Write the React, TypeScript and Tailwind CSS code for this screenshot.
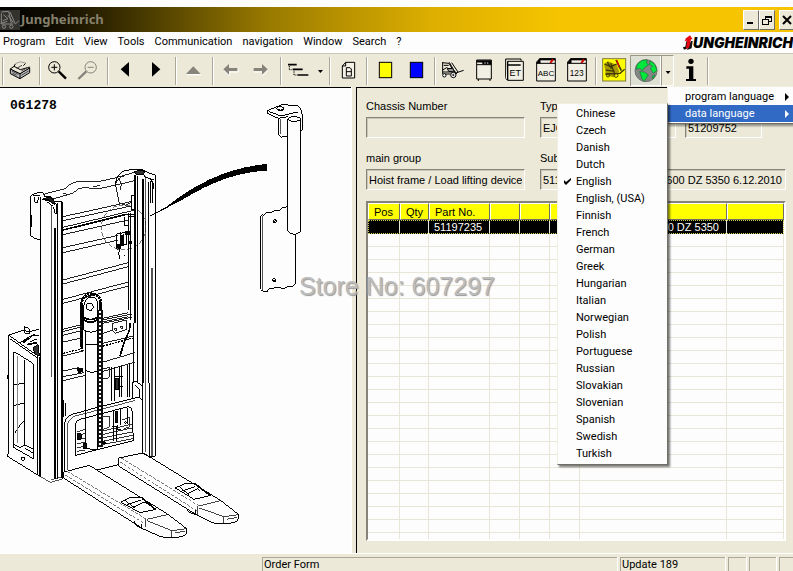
import React from "react";

const UI = "font-['Roboto',sans-serif]";
const FORM = "font-['Liberation_Sans',Arial,sans-serif]";

const menus = ["Program", "Edit", "View", "Tools", "Communication", "navigation", "Window", "Search", "?"];

const languages = [
  "Chinese", "Czech", "Danish", "Dutch", "English", "English, (USA)", "Finnish",
  "French", "German", "Greek", "Hungarian", "Italian", "Norwegian", "Polish",
  "Portuguese", "Russian", "Slovakian", "Slovenian", "Spanish", "Swedish", "Turkish",
];

const columns = ["Pos", "Qty", "Part No.", "", "", "", "", ""];
const firstRow = ["", "", "51197235", "", "", "", "600 DZ 5350", ""];
const emptyRows = Array.from({ length: 24 }, (_, i) => i);

function Tool({ label, x, children, pressed }: { label: string; x: number; children: React.ReactNode; pressed?: boolean }) {
  return (
    <button
      type="button"
      aria-label={label}
      className={`h-[31px] w-[31px] shrink-0 ${pressed ? "bg-[#dfe0d4] shadow-[inset_1px_1px_0_#9a9a8c,inset_-1px_-1px_0_#ffffff]" : ""}`}
    >
      <svg viewBox={`${x} 165 93 93`} className="block h-[31px] w-[31px]" fill="none" stroke="#000" strokeWidth="3">
        {children}
      </svg>
    </button>
  );
}

function Sep() {
  return <div className="mx-0.5 h-7 w-0.5 shrink-0 border-r border-l border-r-white border-l-[#aca899]" />;
}

function Toolbar() {
  return (
    <div className="flex h-[34px] shrink-0 items-center border-t border-t-[#c9c7b8] bg-[#ece9d8]" role="toolbar">
      <Sep />
      <Tool label="Print" x={18}>
        <path d="M31 207 L60 221 L89 203 V218 L60 236 L31 221 Z" fill="#bdbdbd" />
        <path d="M31 207 L42 198 L48 191 Q58 181 76 189 L70 197 L89 203 L60 221 Z" fill="#ece9d8" stroke="none" />
        <path d="M31 207 L42 199 L61 209 L89 201 M42 199 L46 192 M70 197 L77 190 M60 221 V236 M31 207 L60 221 L89 204" />
        <path d="M46 191 Q60 181 77 189" stroke="#999" />
        <path d="M64 213 L84 202 M36 213 L55 223 M37 219 L50 226 M64 226 L86 213 M50 205 L66 196" stroke="#444" />
      </Tool>
      <Sep />
      <Tool label="Zoom in" x={129}>
        <circle cx="163" cy="202" r="17" />
        <path d="M154 202 H172 M163 193 V211" />
        <path d="M176 214 L198 236" strokeWidth="7" />
      </Tool>
      <Tool label="Zoom out" x={222}>
        <g stroke="#85837a">
          <circle cx="272" cy="202" r="17" />
          <path d="M263 202 H281" />
          <path d="M259 214 L235 237" strokeWidth="7" />
        </g>
      </Tool>
      <Sep />
      <Tool label="Previous" x={333}><path d="M387 186 V230 L362 208 Z" fill="#000" stroke="none" /></Tool>
      <Tool label="Next" x={426}><path d="M456 186 V230 L481 208 Z" fill="#000" stroke="none" /></Tool>
      <Sep />
      <Tool label="Up" x={537}>
        <path d="M558 222 H603 V226 H562 Z" fill="#fff" stroke="none" />
        <path d="M558 222 L580 199 L602 222 Z" fill="#85837a" stroke="none" />
      </Tool>
      <Sep />
      <Tool label="Back" x={648}>
        <path d="M672 212 L688 227 V216 H714 V207" stroke="#fff" />
        <path d="M670 208 L687 192 V204 H712 V213 H687 V224 Z" fill="#85837a" stroke="none" />
      </Tool>
      <Tool label="Forward" x={741}>
        <path d="M804 211 L788 227 V216 H762" stroke="#fff" />
        <path d="M803 208 L786 192 V204 H761 V213 H786 V224 Z" fill="#85837a" stroke="none" />
      </Tool>
      <Sep />
      <Tool label="Structure" x={72}>
        <path d="M84 194 H110 M98 208 H128 M112 225 H145" strokeWidth="5" />
        <path d="M88 198 V209 H96 M102 212 V225 H110" strokeDasharray="3 2" />
      </Tool>
      <button type="button" aria-label="Structure options" className="h-[31px] w-3 shrink-0">
        <svg viewBox="165 165 36 93" className="block h-[31px] w-3"><path d="M174 210 H189 L181 219 Z" /></svg>
      </button>
      <Sep />
      <Tool label="Document" x={219}>
        <path d="M257 187 H284 V234 H247 V198 Z M247 198 H257 V187" fill="#f4f2e6" />
        <path d="M259 203 H270 L274 207 V228 H259 Z M259 215 H274" />
      </Tool>
      <Sep />
      <Tool label="Yellow marker" x={330}><rect x="358" y="187" width="37" height="46" fill="#ff0" /></Tool>
      <Tool label="Blue marker" x={423}><rect x="451" y="187" width="37" height="46" fill="#00f" /></Tool>
      <Sep />
      <Tool label="Truck" x={534}>
        <path d="M548 187 V222 M546 188 L567 190 L580 212 M551 196 H566 M548 210 L560 203 L575 211 L590 218 L611 211 M568 187 L588 222 L594 216 L575 188 M553 222 H572 M548 216 H584" />
        <path d="M562 206 L578 205 L584 216 L566 214 Z" fill="#999" />
        <circle cx="553" cy="226" r="5" fill="#fff" /><circle cx="580" cy="225" r="8" fill="#fff" /><circle cx="580" cy="225" r="2" />
      </Tool>
      <Tool label="Equipment" x={627}>
        <path d="M650 180 H694 V237 H650 Z" fill="#f2f0e4" />
        <path d="M650 184 H694 M667 190 H694" strokeWidth="7" />
        <path d="M650 194 H694 M655 237 V243 M690 237 V243" />
        <path d="M673 189 H677 M681 189 H685" stroke="#fff" />
      </Tool>
      <Tool label="Spare parts" x={720}>
        <path d="M737 234 V177 H783 V182" fill="#ece9d8" />
        <path d="M743 184 H790 V241 H743 L737 235" fill="#f2f0e4" />
        <path d="M743 184 V241 M743 195 H782" strokeWidth="4" />
        <text x="766" y="228" textAnchor="middle" fontSize="27" fill="#000" stroke="none" className="font-['Liberation_Sans',sans-serif]">ET</text>
      </Tool>
      <Tool label="Alphabetical index" x={33}>
        <path d="M59 176 H106 V243 H50 V186 Z" fill="#f2f0e4" />
        <path d="M50 190 L60 176 V190 Z" fill="#000" /><path d="M59 178 H106" strokeWidth="6" /><path d="M60 190 H106" />
        <path d="M91 189 L99 178" stroke="#d00000" strokeWidth="6" />
        <text x="78" y="228" textAnchor="middle" fontSize="24" fill="#000" stroke="none" className="font-['Liberation_Sans',sans-serif]">ABC</text>
      </Tool>
      <Tool label="Numerical index" x={126}>
        <path d="M152 176 H199 V243 H143 V186 Z" fill="#f2f0e4" />
        <path d="M143 190 L153 176 V190 Z" fill="#000" /><path d="M152 178 H199" strokeWidth="6" /><path d="M153 190 H199" />
        <path d="M184 189 L192 178" stroke="#d00000" strokeWidth="6" />
        <text x="170" y="228" textAnchor="middle" fontSize="25" fill="#000" stroke="none" className="font-['Liberation_Sans',sans-serif]">123</text>
      </Tool>
      <Sep />
      <Tool label="Order" x={237}>
        <rect x="248" y="176" width="69" height="67" fill="#ff0" stroke="#807b3a" />
        <path d="M252 192 L264 184 L290 194 L298 216 L280 232 L258 226 Z" fill="#a89a00" stroke="none" />
        <path d="M254 192 L272 200 L290 192 M258 210 L284 214 M256 222 L300 220 L314 208 M272 190 L284 222 M262 186 L274 206" stroke="#403c00" strokeWidth="4" />
        <path d="M288 180 L304 212" stroke="#403c00" strokeWidth="5" />
        <path d="M290 180 L298 202" stroke="#d00000" strokeWidth="4" />
        <circle cx="264" cy="226" r="5" stroke="#403c00" /><circle cx="288" cy="226" r="6" stroke="#403c00" />
      </Tool>
      <Tool label="Language" x={330} pressed>
        <circle cx="378" cy="212" r="33" fill="#858585" stroke="#6d7770" />
        <g fill="#00e83c" stroke="#1b7434" strokeWidth="2">
          <path d="M352 193 L366 181 L382 180 L379 189 L386 194 L373 203 L367 212 L359 205 L349 208 Z" />
          <path d="M390 182 L404 193 L411 211 L400 220 L391 205 L398 199 L389 194 Z" />
          <path d="M359 215 L373 216 L385 225 L379 234 L372 244 L366 237 Z" />
          <path d="M396 229 L405 225 L399 237 Z" />
        </g>
      </Tool>
      <div className={`relative z-10 h-[31px] w-[13px] shrink-0 ${UI} text-[11px] leading-[17px]`}>
        <button type="button" aria-label="Language options" className="block h-[31px] w-[13px] border border-t-[#9a9a8c] border-r-white border-b-white border-l-[#9a9a8c]">
          <svg viewBox="427 168 33 87" className="block h-[29px] w-[11px]"><path d="M438 213 H453 L445 222 Z" /></svg>
        </button>
        <div role="menu" className="absolute top-full left-[6px] w-[130px] border border-[#f1efe2] border-b-[#716f64] bg-[#fdfdfd] py-px shadow-[2px_2px_2px_#00000066]">
          <button type="button" role="menuitem" className="flex w-full items-center justify-between pr-[7px] pl-[17px]">
            program language
            <svg viewBox="0 0 4 8" className="h-2 w-1"><path d="M0 0 L4 4 L0 8 Z" /></svg>
          </button>
          <button type="button" role="menuitem" className="flex w-full items-center justify-between bg-[#316ac5] pr-[7px] pl-[17px] text-white">
            data language
            <svg viewBox="0 0 4 8" className="h-2 w-1" fill="#fff"><path d="M0 0 L4 4 L0 8 Z" /></svg>
          </button>
          <div role="menu" className="absolute top-4 right-full w-[111px] border border-t-[#f1efe2] border-r-[#716f64] border-b-[#716f64] border-l-[#f1efe2] bg-[#fdfdfd] pt-px pb-0.5 text-black shadow-[2px_2px_2px_#00000088]">
            {languages.map((name) => (
              <button key={name} type="button" role="menuitemradio" aria-checked={name === "English"} className="flex w-full items-center">
                <span className="flex w-[18px] justify-center">
                  {name === "English" && (
                    <svg viewBox="0 0 7 7" className="h-[7px] w-[7px]"><path d="M0 2 L2 4 L7 0 V2 L2 7 L0 5 Z" /></svg>
                  )}
                </span>
                {name}
              </button>
            ))}
          </div>
        </div>
      </div>
      <Tool label="Information" x={462}>
        <circle cx="513" cy="184" r="8" fill="#000" stroke="none" />
        <path d="M499 199 H520 V237 H528 V243 H498 V237 H507 V206 H499 Z" fill="#000" stroke="none" />
      </Tool>
      <Sep />
    </div>
  );
}

function TitleBar() {
  const box = "flex h-5 w-4 items-center justify-center border border-t-white border-l-white border-r-[#716f64] border-b-[#716f64] bg-[#ece9d8]";
  return (
    <header className="mt-[7px] flex h-[25px] shrink-0 items-center bg-[linear-gradient(90deg,#000_0px,#120e00_60px,#9a7b00_270px,#dcae00_430px,#f6c400_560px)]">
      <svg viewBox="0 24 60 60" className="h-5 w-5" fill="none" stroke="#8b8b8b" strokeWidth="3">
        <rect x="0" y="24" width="60" height="60" fill="#34322c" stroke="none" />
        <path d="M4 30 L26 28 L34 64 M4 34 V66 H40 M10 38 L24 50 L8 56 M30 30 L46 66 L57 56 M2 64 L22 58 M24 40 L40 62" />
        <circle cx="12" cy="74" r="5" /><circle cx="34" cy="74" r="5" />
      </svg>
      <h1 className="ml-px flex-1 font-['Noto_Sans',sans-serif] text-[13px] font-bold text-[#85806c]">Jungheinrich</h1>
      <button type="button" aria-label="Minimize" className={box}>
        <svg viewBox="0 0 10 10" className="h-2.5 w-2.5"><path d="M1 7 H7 V9 H1 Z" /></svg>
      </button>
      <button type="button" aria-label="Restore" className={box}>
        <svg viewBox="0 0 10 10" className="h-2.5 w-2.5" fill="none" stroke="#000" shapeRendering="crispEdges">
          <path d="M3 1 H10 M3 2 H9.5 V6.5 H7 M3.5 1 V4 M0 4 H7 M.5 4 V9.5 H6.5 V4.5 H0" />
        </svg>
      </button>
      <button type="button" aria-label="Close" className={`${box} -mr-0.5 ml-1`}>
        <svg viewBox="0 0 10 10" className="h-2.5 w-2.5" stroke="#000" strokeWidth="2"><path d="M1 1 L9 9 M9 1 L1 9" /></svg>
      </button>
    </header>
  );
}

function MenuBar() {
  return (
    <nav className={`flex h-[21px] shrink-0 items-center gap-2.5 bg-[#fdfdfd] pl-[3px] ${UI} text-[11px]`}>
      {menus.map((m) => <button key={m} type="button">{m}</button>)}
      <div className="ml-auto flex items-center" aria-label="Jungheinrich">
        <svg viewBox="488 100 30 48" className="h-4 w-2.5 shrink-0">
          <path d="M503 122 L501 138 Q499 145 490 143 L488 136 L495 135 L498 118 Z M503 136 L512 118 L517 118 L514 140 L500 145 Z" fill="#111" />
          <path d="M492 120 L496 112 L494 112 L509 101 L517 113 L512 113 L507 136 Q505 141 497 141 L500 117 L496 117 Z" fill="#e30613" />
        </svg>
        <span className="font-['Inter',sans-serif] text-[14px] leading-[14px] font-black italic">UNGHEINRICH</span>
      </div>
    </nav>
  );
}

/* Exploded view of the hoist frame; both drawing groups use a 3:1 working scale. */
function Drawing() {
  return (
    <svg viewBox="0 88 351 464" className="block h-[464px] w-[351px]" fill="none" stroke="#000" shapeRendering="crispEdges" role="img" aria-label="Hoist frame drawing">
      <text x="10" y="109" fontSize="13" fontWeight="bold" fill="#000" stroke="none" className="font-['Liberation_Mono',monospace]">061278</text>
      <g transform="translate(0 90) scale(.33333)" strokeWidth="3">
        {/* bracket and tube */}
        <path d="M802 62 L847 44 L893 47 Q907 58 907 75 V120 L902 124 M802 62 V70 L835 85 L864 80 M806 64 L842 78 L893 66 M835 85 V130 Q838 143 850 141 L864 137" />
        <path d="M841 86 V132" strokeWidth="2" />
        <ellipse cx="841" cy="56" rx="11" ry="6" /><path d="M834 58 Q841 64 850 58" />
        <path d="M864 88 V424 Q883 442 902 424 V88" fill="#fdfdfd" />
        <ellipse cx="883" cy="87" rx="19" ry="7" fill="#fdfdfd" />
        <path d="M864 350 L848 353 L838 362 L822 362 L815 368 L798 368 L791 376 Q783 372 782 382 V598 Q790 609 802 605 L806 597 L838 591 L846 597 L862 591 L880 588 Q886 584 886 576 V434" />
        <path d="M789 377 V602" strokeWidth="2" />
        <circle cx="824" cy="394" r="5" /><circle cx="823" cy="571" r="5" /><path d="M819 398 L828 390 M818 575 L827 567" />
        {/* pointer */}
        <path d="M436 385 L500 350 Q640 236 801 222 V242 Q680 248 560 322 L470 370 Z" fill="#000" stroke="none" />
        <circle cx="371" cy="412" r="67" strokeWidth="3" strokeDasharray="14 6" stroke="#777" />
        {/* cross members */}
        <g strokeWidth="3" stroke="#222">
          <path d="M130 313 L195 296 L207 285 Q222 274 240 274 Q266 276 290 276 L345 264 L404 247 M145 331 L218 310 L236 296 Q250 292 266 294 L294 297 L405 272 M190 310 L200 313 M280 290 L300 286" />
          <path d="M189 380 L393 335 M189 392 L393 348 M189 412 L405 360 M189 434 L385 390 M189 473 L355 436 M189 488 L355 450 M189 570 L385 518 M189 582 L385 530 M189 628 L385 576 M189 640 L385 588 M308 690 L395 672 M308 700 L395 682 M189 718 L244 704" />
          <path d="M345 288 Q352 262 372 258 M348 292 L358 340 L378 346 L395 335 M355 265 L365 282 L360 300" />
        </g>
        <path d="M189 420 L375 374" strokeWidth="5" />
        {/* left bracket */}
        <path d="M92 438 V320 Q94 312 118 307 Q133 305 133 320 M92 438 Q104 446 121 450 M102 322 Q104 342 112 338 L116 322 M96 374 V410 M100 316 L120 318 M135 320 L152 320 Q164 328 164 344 M126 328 L160 336 L187 334 M140 334 L160 350 L166 372 M150 330 L170 344 V372" />
        <path d="M128 326 L150 322 L166 338 L160 342 L144 328 Z" fill="#222" />
        {/* top right head */}
        <path d="M346 290 Q346 252 376 241 L412 238 L428 240 L440 246 L467 256 M402 244 L430 250 L436 262 L462 270 M452 268 Q462 280 462 296 M452 272 V338 M458 272 V340" />
        <path d="M402 246 L418 240 L434 244 L430 255 L410 254 Z" fill="#333" />
        <path d="M394 318 H404 V360 H394 Z" fill="#fdfdfd" />
        {/* mast posts */}
        <path d="M121 322 V1160 M172 340 V1166 M187 336 V1168 M385 370 V660 M392 370 V690 M468 258 V550 M466 550 V1097" />
        <path d="M166 415 V1168" strokeWidth="5" />
        <path d="M155 345 V860 M436 258 V1085" strokeWidth="2" />
        <path d="M187 336 V1165 M406 255 V700" strokeWidth="5" />
        <path d="M430 268 V880 M446 275 V880" strokeWidth="5" />
        <path d="M428 880 V1090 M449 880 V1100" />
        <path d="M456 535 V1097" stroke="#555" strokeWidth="5" />
        <path d="M401 700 V880 M412 258 V880" strokeWidth="3" />
        {/* limit switch */}
        <path d="M350 432 L362 428 V474 L350 478 Z M362 430 L380 424 V462 L364 468 M358 478 Q354 490 360 508 M376 374 H404 V380 H384 M374 380 V408 H384" />
        <path d="M364 438 L372 434 V464 L364 468 Z M352 464 H362 V474 H352 Z M378 424 H392 V434 H378 Z M386 454 H396 V460 H386 Z" fill="#000" />
        <circle cx="374" cy="497" r="1" />
        {/* chain wheel */}
        <path d="M244 770 V640 Q250 613 274 612 Q300 613 303 640 V690" strokeWidth="9" strokeDasharray="7 2" />
        <path d="M252 700 V645 Q256 622 276 621 Q292 624 294 645 V700" fill="#fdfdfd" />
        <circle cx="269" cy="650" r="11" />
      </g>
      <g transform="translate(0 310) scale(.33333)" strokeWidth="3">
        {/* battery cabinet */}
        <path d="M26 75 L24 440 L118 498 M26 75 L72 60 L84 66 L118 58 M26 75 Q70 108 114 138 M30 86 L110 142 M114 138 V496 M120 140 V498 M60 98 L90 80 L104 74 M72 50 L74 70 L88 72 V56 L72 50 M84 90 L98 74 L118 78 M90 96 L112 86 M22 196 V208" />
        <path d="M100 112 L114 104 L118 138 L104 132 Z" fill="#333" /><path d="M70 98 L86 82 M80 104 L110 98" strokeWidth="5" />
        <path d="M40 128 L46 127 L96 158 Q100 162 100 170 V446 L40 412 Z M75 150 V405 M40 224 L75 220 M40 287 L75 278 M75 330 L60 345 L44 370 M75 405 L98 416 M75 415 L98 428 M42 404 L60 412 L75 405" />
        <path d="M52 138 V400" stroke="#888" /><circle cx="69" cy="446" r="5" />
        <path d="M118 498 L152 517 L187 507 M152 510 L190 500" strokeWidth="2" />
        {/* lift cylinder and chain */}
        <path d="M301 0 V410" strokeWidth="15" stroke="#111" />
        <path d="M301 4 V405" stroke="#fff" strokeWidth="5" strokeDasharray="4 8" />
        <path d="M247 0 V130" strokeWidth="7" strokeDasharray="7 3" />
        <path d="M252 0 V60 L257 66 V415 L292 420 V0" fill="#fdfdfd" />
        <path d="M252 22 Q270 36 292 22 M252 30 Q270 44 292 30" strokeWidth="5" />
        <path d="M252 60 Q272 72 292 62 M257 104 H292 M257 182 Q274 192 292 184 M266 0 H276" />
        <path d="M232 175 H246 L250 184 L236 188 Z" fill="#000" />
        {/* lower cross members */}
        <g strokeWidth="3" stroke="#222">
          <path d="M189 65 L245 50 M189 76 L245 62 M189 96 L245 84 M189 138 L252 122 M189 183 L236 173 M189 200 L252 188 M189 212 L256 196 M308 25 L385 8 M308 36 L385 20 M308 100 L400 78 M310 156 L405 128 M310 184 L405 156 M310 70 L340 60" />
          <path d="M338 40 L380 30 V58 L346 70 L338 62 Z" /><circle cx="347" cy="58" r="4" /><circle cx="365" cy="52" r="4" />
          <path d="M310 176 L330 172 V200 Q320 210 310 206" />
        </g>
        <path d="M189 130 L246 116 M310 108 L400 84" strokeDasharray="6 3" strokeWidth="4" />
        <path d="M391 40 L388 62 L374 92 L360 138" strokeWidth="5" />
        <path d="M336 172 V272 M343 172 V272 M358 168 V262 M364 168 V262 M383 164 V260 M389 162 V260 M345 200 H368 M350 230 H370" strokeWidth="3" />
        <path d="M346 205 H356 V240 H346 Z" fill="#333" />
        {/* fork carriage */}
        <path d="M194 488 V340 Q196 320 220 312 L300 290 L412 262 Q426 262 428 276 V430" />
        <path d="M202 480 V345 Q206 326 226 318 L306 297 L404 272" strokeWidth="2" />
        <path d="M398 216 H410 L428 228 V264 M398 216 V264 M404 226 L418 236 V262 M190 270 V320 M197 280 V318" />
        <path d="M226 436 V345 Q228 332 240 328 L384 290 Q395 290 396 302 L400 392 Z" />
        <path d="M230 366 L256 358 M230 378 L256 370 M230 390 L256 384 M230 402 L256 396 M230 414 L256 408 M230 424 L256 420 M306 364 L396 342 M306 374 L396 354 M306 384 L398 366 M306 394 L398 376 M306 404 L398 386 M306 320 H330 V350 L306 360 M366 330 L390 322 V350 L368 358" strokeWidth="3" stroke="#333" />
        <path d="M232 372 H244 V388 H232 Z M346 304 H354 V338 H346 Z M250 400 H260 V415 H250 Z M310 392 L320 402 H306 Z" fill="#111" />
        <path d="M340 300 V392 M362 298 V345 M336 350 H350 V392 M352 345 V360 H362 M384 294 V342" />
        <circle cx="376" cy="338" r="3" />
        {/* forks */}
        <g>
          <path d="M192 486 L268 466 L502 612 L560 656 Q562 674 550 678 Q520 688 482 680 L428 656 L192 505 Z" fill="#fdfdfd" />
          <path d="M202 484 L440 628 M196 495 L432 640" strokeWidth="3" stroke="#777" strokeDasharray="9 5" />
          <path d="M440 628 L502 614 M436 628 V652 M440 632 L516 662 L558 656 M516 662 V680 M524 668 L556 664" strokeWidth="3" stroke="#444" />
          <path d="M402 634 L408 646 L426 656 V642" />
          <path d="M362 576 L392 562 L428 564 L468 598 L420 608 Z M382 584 L424 570 M398 592 L434 576 L440 582 M376 572 L404 594" />
          <path d="M428 566 L466 598" strokeWidth="5" />
          <path d="M356 444 L430 429 L660 570 L714 612 Q718 632 706 636 Q676 646 636 638 L592 616 L356 468 Z" fill="#fdfdfd" />
          <path d="M364 444 L598 588 M360 456 L590 602" strokeWidth="3" stroke="#777" strokeDasharray="9 5" />
          <path d="M598 588 L660 572 M592 588 V614 M598 594 L672 620 L714 614 M672 620 V640 M680 628 L712 622" strokeWidth="3" stroke="#444" />
          <path d="M560 594 L566 606 L586 614 V600" />
          <path d="M526 534 L552 522 L588 522 L632 556 L582 568 Z M544 544 L584 530 M560 552 L594 536 L600 542 M538 530 L566 554" />
          <path d="M588 524 L630 556" strokeWidth="5" />
          <path d="M290 480 L356 464 M449 438 L466 440 M428 430 L450 442" />
        </g>
      </g>
    </svg>
  );
}

const field = "block h-[21px] border border-t-[#85837a] border-l-[#85837a] border-r-white border-b-white bg-transparent px-0.5 shadow-[inset_1px_1px_0_#c9c7b8] outline-none";

function PartsPanel() {
  return (
    <section className={`flex min-h-0 min-w-0 flex-col border-t border-l border-black bg-[#ece9d8] pt-2.5 pr-[7px] pb-3 pl-[9px] ${FORM} text-[11px] leading-4`}>
      <div className="flex gap-[15px]">
        <div className="w-[159px]">
          <label htmlFor="chassis">Chassis Number</label>
          <input id="chassis" readOnly className={`${field} mt-[3px] w-full`} />
        </div>
        <div className="flex items-end gap-[9px]">
          <div className="w-[136px]">
            <label htmlFor="type">Type</label>
            <input id="type" readOnly defaultValue="EJC" className={`${field} mt-[3px] w-full`} />
          </div>
          <input aria-label="Number" readOnly defaultValue="51209752" className={`${field} w-[77px]`} />
        </div>
      </div>
      <div className="mt-3 flex gap-[15px]">
        <div className="w-[159px]">
          <label htmlFor="main">main group</label>
          <input id="main" readOnly defaultValue="Hoist frame / Load lifting device" className={`${field} mt-[3px] w-full`} />
        </div>
        <div className="min-w-0 flex-1">
          <label htmlFor="sub">Sub group</label>
          <input id="sub" readOnly defaultValue="51197235 Hoist frame(s) 600 DZ 5350 6.12.2010" className={`${field} mt-[3px] w-full`} />
        </div>
      </div>
      <div className="mt-[11px] min-h-0 flex-1 overflow-hidden border-2 border-t-[#85837a] border-l-[#85837a] border-r-white border-b-white bg-[#fdfdfd]">
        <table className="w-full table-fixed border-separate border-spacing-0">
          <colgroup>
            <col className="w-8" /><col className="w-[29px]" /><col className="w-[61px]" />
            <col className="w-[30px]" /><col className="w-[30px]" /><col className="w-[30px]" />
            <col className="w-[147px]" /><col />
          </colgroup>
          <thead>
            <tr>
              {columns.map((c, i) => (
                <th key={i} className="h-[17px] border border-t-white border-l-white border-r-[#716f64] border-b-[#716f64] bg-[#ffff00] p-0 pl-[5px] text-left leading-[14px] font-normal">{c}</th>
              ))}
            </tr>
          </thead>
          <tbody>
            <tr className="bg-black text-white outline-1 -outline-offset-1 outline-[#c9c94a] outline-dotted">
              {firstRow.map((c, i) => (
                <td key={i} className={`h-[14px] border-r border-[#e8e6d6] p-0 leading-[13px] whitespace-nowrap ${i === 6 ? "pr-[7px] text-right" : "pl-[5px]"}`}>{c}</td>
              ))}
            </tr>
            {emptyRows.map((r) => (
              <tr key={r}>
                {columns.map((_, i) => <td key={i} className="h-[13px] border-r border-b border-[#e8e6d6] p-0" />)}
              </tr>
            ))}
          </tbody>
        </table>
      </div>
    </section>
  );
}

function StatusBar() {
  const cell = "border-t border-l border-[#aca899] pl-px shadow-[1px_0_0_#ffffff]";
  return (
    <footer className={`flex h-[18px] shrink-0 gap-[3px] border-t border-white bg-[#ece9d8] pt-[3px] ${UI} text-[11px] leading-[13px]`}>
      <div className="w-[259px] shrink-0" />
      <div className={`${cell} flex-1`}>Order Form</div>
      <div className={`${cell} w-[105px]`}>Update 189</div>
      <div className={`${cell} w-[18px]`} />
      <div className={`${cell} w-[27px]`} />
      <div className={`${cell} w-[14px]`} />
    </footer>
  );
}

export default function App() {
  return (
    <div className="relative flex h-screen flex-col overflow-hidden bg-[#fdfdfd] text-black">
      <TitleBar />
      <MenuBar />
      <Toolbar />
      <main className="grid min-h-0 flex-1 grid-cols-[351fr_5px_437fr] bg-[#ece9d8]">
        <section className="min-w-0 overflow-hidden border-t border-black bg-[#fdfdfd]"><Drawing /></section>
        <div className="border-l border-white" />
        <PartsPanel />
      </main>
      <StatusBar />
      <p className="pointer-events-none absolute top-[271px] left-[299px] font-['Liberation_Sans',Arial,sans-serif] text-[25px] leading-[30px] whitespace-nowrap text-[#bcbcbc] [text-shadow:1px_1px_1px_#999999]">Store No: 607297</p>
    </div>
  );
}
